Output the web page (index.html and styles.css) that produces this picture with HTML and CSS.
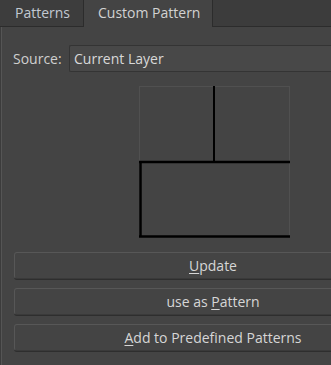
FILE: index.html
```html
<!DOCTYPE html>
<html>
<head>
<meta charset="utf-8">
<link rel="stylesheet" href="styles.css">
</head>
<body>
<div class="window">
  <div class="tabbar">
    <div class="tab">Patterns</div>
    <div class="tab active">Custom Pattern</div>
    <div class="tab-fill"></div>
  </div>
  <div class="pane">
    <div class="source-row">
      <span class="label">Source:</span>
      <div class="combo">Current Layer</div>
    </div>
    <div class="preview-row">
      <svg class="preview" width="151" height="152" viewBox="0 0 151 152">
        <rect x="0.5" y="0.5" width="150" height="150" fill="none" stroke="#505050" stroke-width="1"/>
        <line x1="75" y1="0" x2="75" y2="76" stroke="#000" stroke-width="2"/>
        <line x1="0" y1="76" x2="151" y2="76" stroke="#000" stroke-width="2.5"/>
        <line x1="1.5" y1="76" x2="1.5" y2="151" stroke="#000" stroke-width="2.5"/>
        <line x1="0" y1="150.5" x2="151" y2="150.5" stroke="#000" stroke-width="2.5"/>
      </svg>
    </div>
    <div class="buttons">
      <div class="btn"><u>U</u>pdate</div>
      <div class="btn">use as <u>P</u>attern</div>
      <div class="btn"><u>A</u>dd to Predefined Patterns</div>
    </div>
  </div>
</div>
</body>
</html>
```

FILE: styles.css
```css
html, body {
  margin: 0;
  padding: 0;
  background: #3c3c3c;
  overflow: hidden;
}
body {
  width: 331px;
  height: 365px;
  font-family: "Open Sans", "Noto Sans", sans-serif;
  font-size: 14px;
  color: #cfcfcf;
}
.window {
  width: 331px;
  height: 365px;
  overflow: hidden;
}
.tabbar {
  display: flex;
  height: 27px;
}
.tab {
  box-sizing: border-box;
  height: 27px;
  width: 84px;
  padding-left: 15px;
  line-height: 26px;
  background: #3d3d3d;
  border-right: 1px solid #2c2c2c;
  border-bottom: 1px solid #2c2c2c;
  color: #c2c9d2;
  white-space: nowrap;
}
.tab.active {
  width: 129px;
  padding-left: 14px;
  background: #444444;
  border-bottom: none;
  color: #d2d2d2;
}
.tab-fill {
  flex: 1;
  background: #3c3c3c;
  border-bottom: 1px solid #2c2c2c;
}
.pane {
  box-sizing: border-box;
  height: 338px;
  margin-left: 1px;
  background: #444444;
  border-left: 1px solid #555555;
  padding-top: 18px;
  overflow: hidden;
}
.source-row {
  display: flex;
  align-items: center;
  height: 27px;
}
.label {
  margin-left: 11px;
  width: 56px;
  flex: none;
}
.combo {
  box-sizing: border-box;
  height: 27px;
  flex: 1;
  background: #484848;
  border: 1px solid #343434;
  border-right: none;
  border-radius: 2px 0 0 2px;
  padding-left: 4px;
  line-height: 25px;
  color: #d8d8d8;
}
.preview-row {
  display: flex;
  padding-top: 14px;
  padding-left: 137px;
}
.preview {
  display: block;
}
.buttons {
  display: flex;
  flex-direction: column;
  gap: 9px;
  padding-top: 14px;
  padding-left: 12px;
}
.btn {
  box-sizing: border-box;
  flex: none;
  width: 398px;
  height: 27px;
  background: #444444;
  border: 1px solid #575757;
  border-bottom-color: #3a3a3a;
  border-radius: 3px;
  box-shadow: 0 1px 0 #2e2e2e;
  text-align: center;
  line-height: 25px;
  color: #d6d6d6;
  white-space: nowrap;
}
.btn u {
  text-underline-offset: 2px;
}
```
